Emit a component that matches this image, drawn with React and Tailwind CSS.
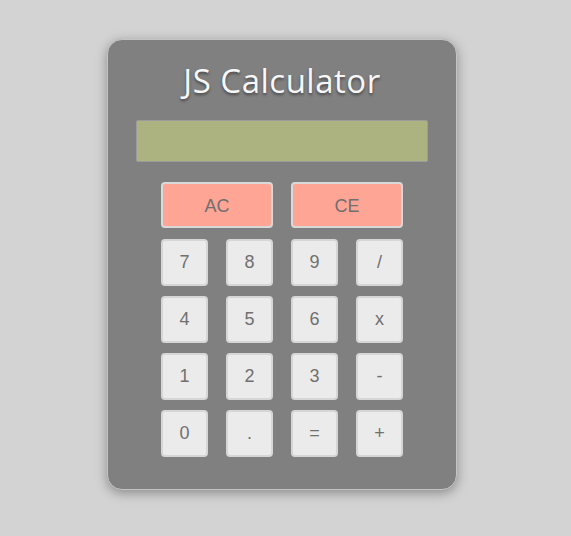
import React from 'react'

const keys = ['7', '8', '9', '/', '4', '5', '6', 'x', '1', '2', '3', '-', '0', '.', '=', '+']

export default function App() {
  return (
    <div className="min-h-[536px] w-full bg-[#d3d3d3] pt-[39px]">
      <div className="ml-[107px] w-[350px] h-[451px] rounded-[15px] border border-[#c4c4c4] bg-[#808080] shadow-[0_3px_12px_rgba(0,0,0,0.35)] flex flex-col items-center">
        <h1 className="mt-[21px] h-[40px] text-[33px] leading-[40px] font-normal text-[#f7f7f7] [text-shadow:0_2px_3px_rgba(0,0,0,0.45)] font-['Open_Sans',sans-serif] tracking-[0.5px]">
          JS Calculator
        </h1>
        <div className="mt-[19px] w-[292px] h-[42px] rounded-[2px] border border-[#9c9c9c] bg-[#adb380]" />
        <div className="mt-[20px] w-[242px] flex flex-col gap-[11px] font-['Liberation_Sans',Arial,sans-serif] text-[#707070] text-[18px]">
          <div className="flex justify-between">
            <button className="w-[112px] h-[46px] pt-[2px] rounded-[4px] border-2 border-[#d9d9d9] bg-[#ffa596]">AC</button>
            <button className="w-[112px] h-[46px] pt-[2px] rounded-[4px] border-2 border-[#d9d9d9] bg-[#ffa596]">CE</button>
          </div>
          <div className="grid grid-cols-[repeat(4,47px)] justify-between gap-y-[10px]">
            {keys.map(k => (
              <button key={k} className="w-[47px] h-[47px] rounded-[4px] border-2 border-[#d6d6d6] bg-[#ebebeb]">
                {k}
              </button>
            ))}
          </div>
        </div>
      </div>
    </div>
  )
}
